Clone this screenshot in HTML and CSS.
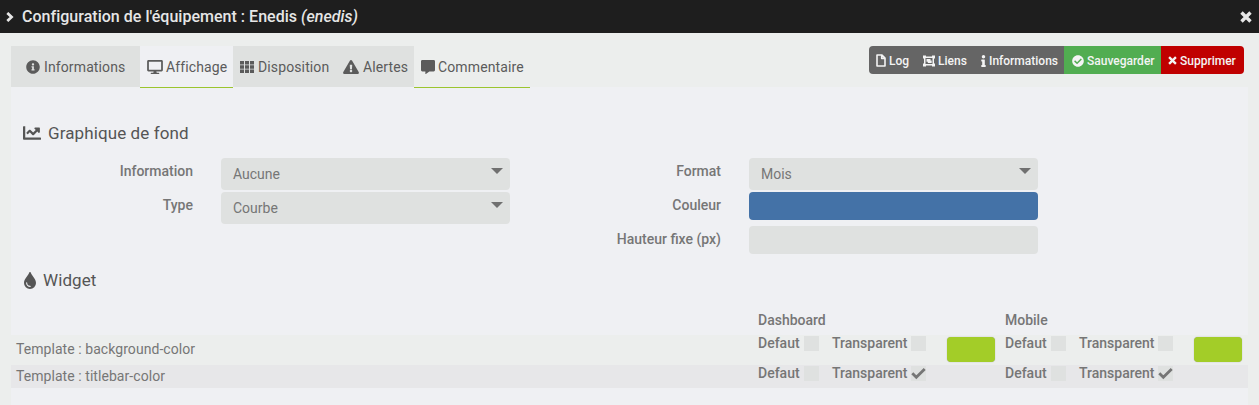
FILE: index.html
```html
<!DOCTYPE html>
<html lang="fr">
<head>
<meta charset="utf-8">
<title>Configuration de l'équipement</title>
<link rel="stylesheet" href="styles.css">
</head>
<body>
<header class="titlebar">
  <svg class="chevron" viewBox="0 0 8 10"><path d="M1.300 .9l4.300 4.100-4.300 4.100" fill="none" stroke="currentColor" stroke-width="2.700"/></svg>
  <h1 class="title">Configuration de l'équipement : Enedis <em>(enedis)</em></h1>
  <svg class="close" viewBox="0 0 12 12"><path d="M1.500 1.500l9 9M10.500 1.500l-9 9" stroke="currentColor" stroke-width="3.400"/></svg>
</header>
<div class="toolbar">
  <nav class="tabs">
    <a class="tab tab-info"><svg class="i14" viewBox="0 0 512 512"><path d="M256 8C119 8 8 119 8 256s111 248 248 248 248-111 248-248S393 8 256 8zm0 110c23.200 0 42 18.800 42 42s-18.800 42-42 42-42-18.800-42-42 18.800-42 42-42zm56 254c0 6.600-5.400 12-12 12h-88c-6.600 0-12-5.400-12-12v-24c0-6.600 5.400-12 12-12h12v-64h-12c-6.600 0-12-5.400-12-12v-24c0-6.600 5.400-12 12-12h64c6.600 0 12 5.400 12 12v100h12c6.600 0 12 5.400 12 12v24z"/></svg><span>Informations</span></a>
    <a class="tab tab-display open"><svg class="i16" viewBox="0 0 576 512"><path d="M528 0H48C21.500 0 0 21.500 0 48v320c0 26.500 21.500 48 48 48h192l-16 48h-72c-13.300 0-24 10.700-24 24s10.700 24 24 24h272c13.300 0 24-10.700 24-24s-10.700-24-24-24h-72l-16-48h192c26.500 0 48-21.500 48-48V48c0-26.500-21.500-48-48-48zm-16 352H64V64h448v288z"/></svg><span>Affichage</span></a>
    <a class="tab tab-layout"><svg class="i14" viewBox="0 0 14 14"><path d="M0 1h4v3.400H0zM5 1h4v3.400H5zM10 1h4v3.400h-4zM0 5.300h4v3.400H0zM5 5.300h4v3.400H5zM10 5.300h4v3.400h-4zM0 9.600h4V13H0zM5 9.600h4V13H5zM10 9.600h4V13h-4z"/></svg><span>Disposition</span></a>
    <a class="tab tab-alerts"><svg class="i16" viewBox="0 0 576 512"><path d="M569.500 440C588 472 564.800 512 527.900 512H48.100c-36.900 0-60-40.100-41.600-72L246.400 24c18.500-32 64.700-32 83.200 0l239.900 416zM288 354c-25.400 0-46 20.600-46 46s20.600 46 46 46 46-20.600 46-46-20.600-46-46-46zm-43.700-165.300l7.400 136c.4 6.400 5.600 11.300 12 11.300h48.500c6.400 0 11.600-5 12-11.300l7.400-136c.4-6.900-5.100-12.700-12-12.700h-63.400c-6.900 0-12.300 5.800-11.900 12.700z"/></svg><span>Alertes</span></a>
    <a class="tab tab-comment open"><svg class="i14" viewBox="0 0 512 512"><path d="M464 0H48C21 0 0 21 0 48v320c0 27 21 48 48 48h112v84c0 9.800 11.200 15.500 19.100 9.700L304 416h160c27 0 48-21 48-48V48c0-27-21-48-48-48z"/></svg><span>Commentaire</span></a>
  </nav>
  <div class="actions">
    <button class="btn log"><svg viewBox="0 0 10 13"><path d="M1 1h5l3 3v8H1zM5.700 1v3.400H9" fill="none" stroke="currentColor" stroke-width="1.600" stroke-linejoin="round"/></svg>Log</button>
    <button class="btn links"><svg viewBox="0 0 12 12"><path d="M0 .5h3v1h6v-1h3v3h-1v5h1v3H9v-1H3v1H0v-3h1v-5H0zM2.500 3v6h7V3zM3.500 4h4v1.500h1.200V8H4.800V6.700H3.500z" fill-rule="evenodd"/></svg>Liens</button>
    <button class="btn infos"><svg viewBox="0 0 192 512"><path d="M20 424.200h20V279.800H20c-11 0-20-9-20-20V212c0-11 9-20 20-20h112c11 0 20 9 20 20v212.200h20c11 0 20 9 20 20V492c0 11-9 20-20 20H20c-11 0-20-9-20-20v-47.800c0-11 9-20 20-20zM96 0C56.200 0 24 32.200 24 72s32.200 72 72 72 72-32.200 72-72S135.800 0 96 0z"/></svg>Informations</button>
    <button class="btn save"><svg viewBox="0 0 512 512"><path d="M504 256c0 137-111 248-248 248S8 393 8 256 119 8 256 8s248 111 248 248zM227.300 387.300l184-184c6.200-6.200 6.200-16.400 0-22.600l-22.600-22.600c-6.200-6.200-16.400-6.200-22.600 0L216 308.100l-70.100-70.100c-6.200-6.200-16.400-6.200-22.600 0l-22.600 22.600c-6.200 6.200-6.200 16.400 0 22.600l104 104c6.200 6.300 16.400 6.300 22.600.1z"/></svg>Sauvegarder</button>
    <button class="btn remove"><svg viewBox="0 0 10 10"><path d="M1.200 1.200l7.600 7.600M8.800 1.200L1.200 8.800" stroke="currentColor" stroke-width="2.600"/></svg>Supprimer</button>
  </div>
</div>
<main class="panel">
  <h2 class="legend"><svg class="i18" viewBox="0 0 512 512"><path d="M64 64v320h432c9 0 16 7 16 16v32c0 9-7 16-16 16H32c-18 0-32-14-32-32V80c0-9 7-16 16-16zM464 96H346c-21 0-32 26-17 41l33 32-74 74-73-73c-13-13-33-13-46 0l-69 69c-6 6-6 16 0 23l23 22c6 7 16 7 23 0l46-46 73 73c13 13 33 13 46 0l96-97 33 33c15 15 40 4 40-17V112c0-9-7-16-16-16z"/></svg><span>Graphique de fond</span></h2>
  <div class="form">
    <div class="column">
      <label>Information</label><div class="field select">Aucune</div>
      <label>Type</label><div class="field select">Courbe</div>
    </div>
    <div class="column">
      <label>Format</label><div class="field select">Mois</div>
      <label>Couleur</label><div class="field blue"></div>
      <label>Hauteur fixe (px)</label><div class="field"></div>
    </div>
  </div>
  <h2 class="legend widget"><svg class="drop" viewBox="0 0 12 17"><path d="M6 0c.5 0 .8.300.9.700C7.800 4 12 6.500 12 11a6 6 0 0 1-12 0C0 6.500 4.200 4 5.100.7 5.200.3 5.500 0 6 0zM2.100 10.800a4 4 0 0 0 4 4.200.6.600 0 0 0 0-1.200 2.900 2.900 0 0 1-2.900-3 .55.55 0 0 0-1.100 0z" fill-rule="evenodd"/></svg><span>Widget</span></h2>
  <div class="table">
    <div class="row head"><span></span><b>Dashboard</b><b>Mobile</b></div>
    <div class="row first">
      <span class="name">Template : background-color</span>
      <div class="options"><b>Defaut</b><i class="box"></i><b>Transparent</b><i class="box"></i><i class="color"></i></div>
      <div class="options"><b>Defaut</b><i class="box"></i><b>Transparent</b><i class="box"></i><i class="color"></i></div>
    </div>
    <div class="row second">
      <span class="name">Template : titlebar-color</span>
      <div class="options"><b>Defaut</b><i class="box"></i><b>Transparent</b><i class="box"><svg viewBox="0 0 15 15"><path d="M1.300 7.300l4 4L13.700 3" fill="none" stroke="currentColor" stroke-width="2.800"/></svg></i></div>
      <div class="options"><b>Defaut</b><i class="box"></i><b>Transparent</b><i class="box"><svg viewBox="0 0 15 15"><path d="M1.300 7.300l4 4L13.700 3" fill="none" stroke="currentColor" stroke-width="2.800"/></svg></i></div>
    </div>
  </div>
</main>
</body>
</html>
```

FILE: styles.css
```css
* { box-sizing: border-box; }
body {
  margin: 0;
  height: 405px;
  overflow: hidden;
  display: flex;
  flex-direction: column;
  background: #eceeed;
  color: #767676;
  font: 14px/20px Roboto, sans-serif;
}
svg { display: block; flex: none; fill: currentColor; }
.titlebar {
  height: 33px;
  flex: none;
  display: flex;
  align-items: center;
  padding: 0 7px 0 6px;
  background: #1e1e1e;
  color: #e6e6e6;
}
.chevron { width: 8px; height: 10px; margin-right: 8px; }
.title { flex: 1; margin: 0; font-size: 16px; font-weight: 500; letter-spacing: .02px; }
.close { width: 12px; height: 12px; }
.toolbar {
  height: 54px;
  flex: none;
  display: flex;
  justify-content: space-between;
  padding: 13px 15px 0 11px;
}
.tabs { position: relative; z-index: 1; display: flex; height: 42px; align-items: flex-start; }
.tab {
  display: flex;
  align-items: center;
  gap: 4px;
  height: 41px;
  padding: 0 0 0 7px;
  background: #dfe1e0;
  color: #5b5b5b;
  letter-spacing: .12px;
  white-space: nowrap;
}
.tab.open { height: 42px; border-bottom: 1px solid #9bc52e; }
.tab-info { width: 129px; padding-left: 15px; }
.tab-display { width: 93px; background: #eff0f3; }
.tab-layout { width: 103px; }
.tab-alerts { width: 78px; }
.tab-comment { width: 116px; background: #eceeed; }
.tab-display, .tab-comment { gap: 3px; }
.i14 { width: 14px; height: 14px; }
.i16 { width: 16px; height: 14px; }
.i18 { width: 18px; height: 18px; }
.drop { width: 12px; height: 17px; }
.actions { display: flex; height: 28px; border-radius: 4px; overflow: hidden; }
.btn {
  display: flex;
  align-items: center;
  gap: 3px;
  height: 28px;
  margin: 0;
  border: 0;
  padding: 1px 0 0 7px;
  background: #656565;
  color: #f4f4f4;
  font: 500 12px/18px Roboto, sans-serif;
  white-space: nowrap;
}
.btn svg { height: 12px; }
.log { width: 47px; }
.log svg { width: 10px; height: 13px; }
.links { width: 57px; }
.links svg { width: 12px; }
.infos { width: 91px; padding-left: 8px; }
.infos svg { width: 5px; }
.save { width: 97px; padding-left: 8px; background: #51ad51; }
.save svg { width: 12px; }
.remove { width: 83px; background: #c00000; }
.remove svg { width: 9px; height: 9px; }
.panel { flex: 1; margin: 0 11px; background: #eff0f3; }
.legend {
  display: flex;
  align-items: center;
  gap: 7px;
  height: 24px;
  margin: 0;
  padding-left: 12px;
  color: #555;
  font-size: 17px;
  font-weight: 400;
  letter-spacing: .1px;
}
.panel > .legend:first-child { margin-top: 34px; }
.form { display: flex; gap: 28px; margin-top: 13px; height: 110px; }
.column {
  display: grid;
  grid-template-columns: 182px 289px;
  grid-auto-rows: 32px;
  column-gap: 28px;
  row-gap: 2px;
}
.column + .column { grid-template-columns: 183px 289px; }
label { padding-top: 3px; text-align: right; font-weight: 500; }
.field { height: 28px; border-radius: 4px; background: #dfe1e0; }
.select { height: 32px; padding: 6px 12px; display: flex; justify-content: space-between; }
.select::after {
  content: "";
  margin: 4px -5px 0 0;
  width: 12px;
  height: 6px;
  background: #707070;
  clip-path: polygon(0 0, 100% 0, 50% 100%);
}
.blue { background: #4472a7; }
.widget { gap: 7px; padding-left: 13px; }
.table { margin-top: 18px; }
.row { display: grid; grid-template-columns: 747px 247px 243px; }
b { font-weight: 500; }
.head { height: 25px; }
.first { height: 30px; background: #eceeed; }
.second { height: 23px; background: #e7e7e9; }
.name { padding: 4px 0 0 5px; letter-spacing: .06px; }
.second .name { padding-top: 1px; }
.options {
  display: grid;
  grid-template-columns: 46px 28px 79px 36px 48px;
  align-items: start;
  padding-top: 1px;
}
.options b { line-height: 15px; }
.box { width: 15px; height: 15px; background: #dfe1e0; }
.color { width: 48px; height: 25px; margin-top: 1px; border-radius: 4px; background: #a3cd28; box-shadow: 0 0 1px #999; }
```
